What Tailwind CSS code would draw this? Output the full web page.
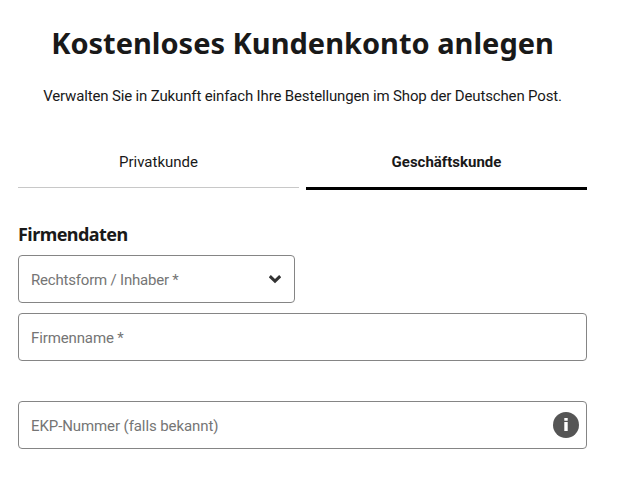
<!DOCTYPE html>
<html lang="de">
<head>
<meta charset="utf-8">
<title>Kundenkonto anlegen</title>
<script src="https://cdn.jsdelivr.net/npm/@tailwindcss/browser@4"></script>
</head>
<body class="bg-white font-['Roboto',sans-serif] text-[15px] leading-5 text-[#191919]">
<main class="ml-[18px] w-[569px] pt-[23px]">
  <h1 class="text-center font-['Noto_Sans',sans-serif] text-[29px] leading-10 font-bold whitespace-nowrap">Kostenloses Kundenkonto anlegen</h1>
  <p class="mt-[23px] text-center tracking-[-0.15px] whitespace-nowrap">Verwalten Sie in Zukunft einfach Ihre Bestellungen im Shop der Deutschen Post.</p>
  <div class="mt-[46px] flex h-[38px] gap-[7px] text-center">
    <div class="h-9 w-[281px] border-b border-[#c8c8c8]">Privatkunde</div>
    <div class="h-[38px] w-[281px] border-b-3 border-black font-bold">Geschäftskunde</div>
  </div>
  <h2 class="mt-[30px] font-['Noto_Sans',sans-serif] text-[18px] leading-7 font-bold tracking-[-0.55px]">Firmendaten</h2>
  <div class="mt-[7px] flex h-12 w-[277px] items-center justify-between rounded-[4px] border border-[#858585] pr-[13px] pl-3 text-[#757575]">
    <span class="pt-0.5 tracking-[-0.2px]">Rechtsform / Inhaber *</span>
    <svg class="h-3 w-3" viewBox="0 0 12 12" fill="none" stroke="#333" stroke-width="3"><path d="M.8 3.2 6 8.2l5.2-5"/></svg>
  </div>
  <div class="mt-[10px] flex h-12 items-center rounded-[4px] border border-[#858585] px-3 pt-0.5 tracking-[-0.12px] text-[#757575]">Firmenname *</div>
  <div class="mt-10 flex h-12 items-center justify-between rounded-[4px] border border-[#858585] pr-[7px] pl-3 text-[#757575]">
    <span class="pt-0.5 tracking-[-0.09px]">EKP-Nummer (falls bekannt)</span>
    <svg class="h-[26px] w-[26px]" viewBox="0 0 26 26"><circle cx="13" cy="13" r="13" fill="#555"/><path d="M11.3 6h3.4v2.7h-3.4zM11.3 10h3.4v9h-3.4z" fill="#fff"/></svg>
  </div>
</main>
</body>
</html>
